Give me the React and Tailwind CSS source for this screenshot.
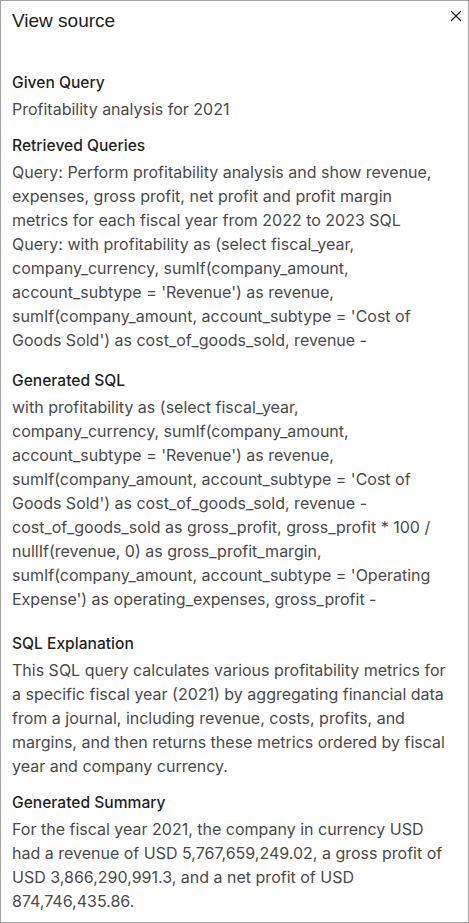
import React from 'react'
import { X } from 'lucide-react'

const sections = [
  { title: 'Given Query', body: 'Profitability analysis for 2021' },
  {
    title: 'Retrieved Queries',
    clip: 'max-h-[196px] pr-[2px]',
    body: "Query: Perform profitability analysis and show revenue, expenses, gross profit, net profit and profit margin metrics for each fiscal year from 2022 to 2023 SQL Query: with profitability as (select fiscal_year, company_currency, sumIf(company_amount, account_subtype = 'Revenue') as revenue, sumIf(company_amount, account_subtype = 'Cost of Goods Sold') as cost_of_goods_sold, revenue - cost_of_goods_sold as gross_profit, gross_profit * 100 / nullIf(revenue, 0) as gross_profit_margin",
  },
  {
    title: 'Generated SQL',
    clip: 'max-h-[221px] mb-[3px] pr-[2px]',
    body: "with profitability as (select fiscal_year, company_currency, sumIf(company_amount, account_subtype = 'Revenue') as revenue, sumIf(company_amount, account_subtype = 'Cost of Goods Sold') as cost_of_goods_sold, revenue - cost_of_goods_sold as gross_profit, gross_profit * 100 / nullIf(revenue, 0) as gross_profit_margin, sumIf(company_amount, account_subtype = 'Operating Expense') as operating_expenses, gross_profit - operating_expenses as net_profit from journal",
  },
  {
    title: 'SQL Explanation',
    body: 'This SQL query calculates various profitability metrics for a specific fiscal year (2021) by aggregating financial data from a journal, including revenue, costs, profits, and margins, and then returns these metrics ordered by fiscal year and company currency.',
  },
  {
    title: 'Generated Summary',
    body: 'For the fiscal year 2021, the company in currency USD had a revenue of USD 5,767,659,249.02, a gross profit of USD 3,866,290,991.3, and a net profit of USD 874,746,435.86.',
  },
]

export default function App() {
  return (
    <div className="w-[469px] h-[923px] overflow-hidden bg-white border border-[#a3a3a3] px-[11px] pt-[7px] font-['Inter',sans-serif]">
      <div className="flex items-start justify-between">
        <h2 className="text-[19px] leading-[26px] text-[#222] font-['Liberation_Sans',Arial,sans-serif]">View source</h2>
        <button className="text-[#222] -mt-[1px] -mr-[8px]">
          <X size={18} strokeWidth={1.6} />
        </button>
      </div>

      <div className="mt-[37px] w-[435px] flex flex-col gap-[13px]">
        {sections.map(s => (
          <div key={s.title}>
            <h3 className="text-[15.6px] leading-[24px] font-medium text-[#1f1f1f] mb-[2px]">{s.title}</h3>
            <p className={`text-[16px] leading-[24px] text-[#4a4a4a] overflow-hidden ${s.clip || ''}`}>{s.body}</p>
          </div>
        ))}
      </div>
    </div>
  )
}
